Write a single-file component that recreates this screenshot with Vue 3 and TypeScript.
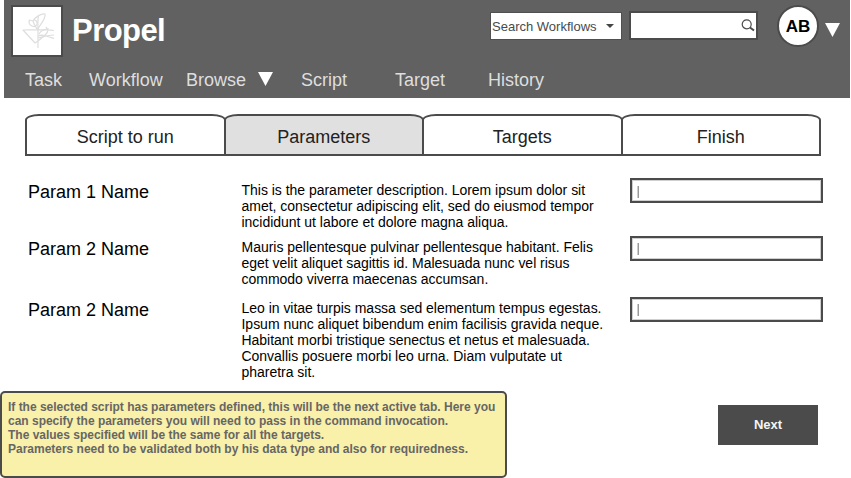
<script setup lang="ts">
import { ref } from 'vue'

interface Param {
  name: string
  lines: string[]
  value: string
}

const nav: { label: string; menu?: boolean }[] = [
  { label: 'Task' },
  { label: 'Workflow' },
  { label: 'Browse', menu: true },
  { label: 'Script' },
  { label: 'Target' },
  { label: 'History' },
]

const tabs: string[] = ['Script to run', 'Parameters', 'Targets', 'Finish']
const activeTab = ref(1)

const params = ref<Param[]>([
  {
    name: 'Param 1 Name',
    lines: [
      'This is the parameter description. Lorem ipsum dolor sit',
      'amet, consectetur adipiscing elit, sed do eiusmod tempor',
      'incididunt ut labore et dolore magna aliqua.',
    ],
    value: '',
  },
  {
    name: 'Param 2 Name',
    lines: [
      'Mauris pellentesque pulvinar pellentesque habitant. Felis',
      'eget velit aliquet sagittis id. Malesuada nunc vel risus',
      'commodo viverra maecenas accumsan.',
    ],
    value: '',
  },
  {
    name: 'Param 2 Name',
    lines: [
      'Leo in vitae turpis massa sed elementum tempus egestas.',
      'Ipsum nunc aliquet bibendum enim facilisis gravida neque.',
      'Habitant morbi tristique senectus et netus et malesuada.',
      'Convallis posuere morbi leo urna. Diam vulputate ut',
      'pharetra sit.',
    ],
    value: '',
  },
])

const notes: string[] = [
  'If the selected script has parameters defined, this will be the next active tab. Here you',
  'can specify the parameters you will need to pass in the command invocation.',
  'The values specified will be the same for all the targets.',
  'Parameters need to be validated both by his data type and also for requiredness.',
]
</script>

<template>
  <div class="page">
    <header class="header">
      <div class="top">
        <div class="logo">
          <svg width="48" height="48" viewBox="0 0 48 48" fill="none" stroke="#dedede" stroke-width="1.2" stroke-linejoin="round">
            <path d="M25 41V23C25 17 24.500 13 25.500 9M41 23.500C31 22 20 22.500 10 23L22 36C25 34 29 31 31 29C35 26 36 23 33 20" />
            <path d="M24.500 22C27 18 33 12 32 7C29 6 22 10 20 14L16.500 13C15 17 18 20 22 19.500C25 18 25 14 21 12.500M24 22C23 20 21 18 20 14" />
            <path d="M25 29C29 27 34 29 41 31.500M25 31C30 30 35 28 41 28M26 27C28 23 33 22 36 22" />
          </svg>
        </div>
        <h1 class="brand">Propel</h1>
        <div class="select">
          <span>Search Workflows</span>
          <svg class="caret" width="8" height="4" viewBox="0 0 8 4"><path d="M0 0h8L4 4z" fill="#444" /></svg>
        </div>
        <div class="search">
          <svg width="14" height="13" viewBox="0 0 14 13" fill="none" stroke="#4a4a4a">
            <circle cx="5.700" cy="5.300" r="4.500" stroke-width="1.200" />
            <path d="M9 8.500l4 3" stroke-width="2" />
          </svg>
        </div>
        <div class="avatar">AB</div>
        <svg class="usertri" width="15" height="14" viewBox="0 0 15 14"><path d="M0 0h15L7.500 14z" fill="#fff" /></svg>
      </div>
      <nav class="nav">
        <a v-for="item in nav" :key="item.label" class="link">
          {{ item.label }}
          <svg v-if="item.menu" class="tri" width="15" height="14" viewBox="0 0 15 14"><path d="M0 0h15L7.500 14z" fill="#fff" /></svg>
        </a>
      </nav>
    </header>

    <div class="tabs">
      <div
        v-for="(tab, i) in tabs"
        :key="tab"
        class="tab"
        :class="{ active: i === activeTab }"
        @click="activeTab = i"
      >
        {{ tab }}
      </div>
    </div>

    <main class="params">
      <div v-for="(p, i) in params" :key="i" class="row">
        <div class="name">{{ p.name }}</div>
        <div class="desc">
          <div v-for="line in p.lines" :key="line">{{ line }}</div>
        </div>
        <div class="field"><span class="cursor"></span></div>
      </div>
    </main>

    <footer class="footer">
      <div class="note">
        <div v-for="n in notes" :key="n">{{ n }}</div>
      </div>
      <button class="next" type="button">Next</button>
    </footer>
  </div>
</template>

<style>
body {
  background: #fff;
  overflow: hidden;
}
</style>

<style scoped>
.page,
.page * {
  box-sizing: border-box;
}
.page {
  width: 851px;
  height: 478px;
  display: flex;
  flex-direction: column;
  font-family: 'Liberation Sans', Arial, sans-serif;
  color: #000;
  white-space: nowrap;
}
.header {
  margin-left: 4px;
  height: 98px;
  width: 846px;
  flex: none;
  background: #616161;
}
.top {
  display: flex;
  align-items: flex-start;
  height: 68px;
  padding-left: 7px;
}
.logo {
  width: 52px;
  height: 52px;
  margin-top: 5px;
  border: 2px solid #4b4b4b;
  background: #fff;
}
.logo svg {
  display: block;
}
.brand {
  width: 418px;
  margin: 12px 0 0 9px;
  font-size: 31px;
  letter-spacing: -0.55px;
  line-height: 37px;
  font-weight: bold;
  color: #fff;
}
.select {
  display: flex;
  align-items: center;
  width: 132px;
  height: 28px;
  margin-top: 12px;
  padding-left: 1px;
  border: 1px solid #505050;
  background: #fff;
  font-size: 13px;
  color: #4a4a4a;
}
.caret {
  margin-left: 9px;
}
.search {
  display: flex;
  justify-content: flex-end;
  width: 129px;
  height: 29px;
  margin: 11px 0 0 7px;
  padding: 6px 1px 0 0;
  border: 2px solid #4b4b4b;
  background: #fff;
}
.avatar {
  width: 42px;
  height: 42px;
  margin: 5px 0 0 19px;
  border: 2px solid #4b4b4b;
  border-radius: 50%;
  background: #fff;
  font-size: 17px;
  font-weight: bold;
  line-height: 39px;
  text-align: center;
}
.usertri {
  margin: 23px 0 0 6px;
}
.nav {
  display: grid;
  grid-template-columns: 64px 97px 115px 94px 93px 80px;
  padding-left: 21px;
  font-size: 18px;
  line-height: 24px;
  color: #dedede;
}
.link {
  display: flex;
}
.tri {
  margin: 4px 0 0 12px;
}
.tabs {
  display: flex;
  width: 796px;
  height: 42px;
  flex: none;
  margin: 16px 0 0 25px;
}
.tab {
  flex: 1 0 200px;
  margin-right: -2px;
  border: 2px solid #4b4b4b;
  border-radius: 14px 14px 0 0 / 6px 6px 0 0;
  background: #fff;
  color: #222;
  font-size: 18px;
  line-height: 42px;
  text-align: center;
}
.tab:last-child {
  margin-right: 0;
}
.tab.active {
  background: #e0e0e0;
}
.params {
  display: grid;
  grid-template-rows: 57px 61px 80px;
  height: 209px;
  padding: 22px 0 0 28px;
}
.row {
  display: grid;
  grid-template-columns: 213.5px 388.5px 193px;
  align-items: start;
}
.name {
  margin-top: 2px;
  font-size: 18px;
  line-height: 24px;
}
.desc {
  margin-top: 4px;
  font-size: 14px;
  letter-spacing: -0.02px;
  line-height: 16px;
}
.field {
  height: 25px;
  padding: 6px 0 0 5px;
  border: 2px solid #4b4b4b;
  box-shadow: inset 0 0 0 1px #cfcfcf;
}
.row + .row .field {
  margin-top: 1px;
  padding-top: 5px;
}
.cursor {
  display: block;
  width: 2px;
  height: 12px;
  border-left: 1px solid #ccc;
  background: #999;
}
.footer {
  display: flex;
  align-items: flex-start;
  padding-top: 26px;
}
.note {
  width: 507px;
  height: 87px;
  padding: 7px 6px;
  border: 2px solid #4b4b4b;
  border-radius: 5px;
  background: #f9f0a9;
  color: #666;
  font-size: 12px;
  font-weight: bold;
  letter-spacing: -0.01px;
  line-height: 14px;
}
.next {
  width: 100px;
  height: 40px;
  margin: 14px 0 0 211px;
  padding: 0 0 1px;
  border: 0;
  background: #4b4b4b;
  color: #f4f4f4;
  font: bold 13px 'Liberation Sans', Arial, sans-serif;
}
</style>
